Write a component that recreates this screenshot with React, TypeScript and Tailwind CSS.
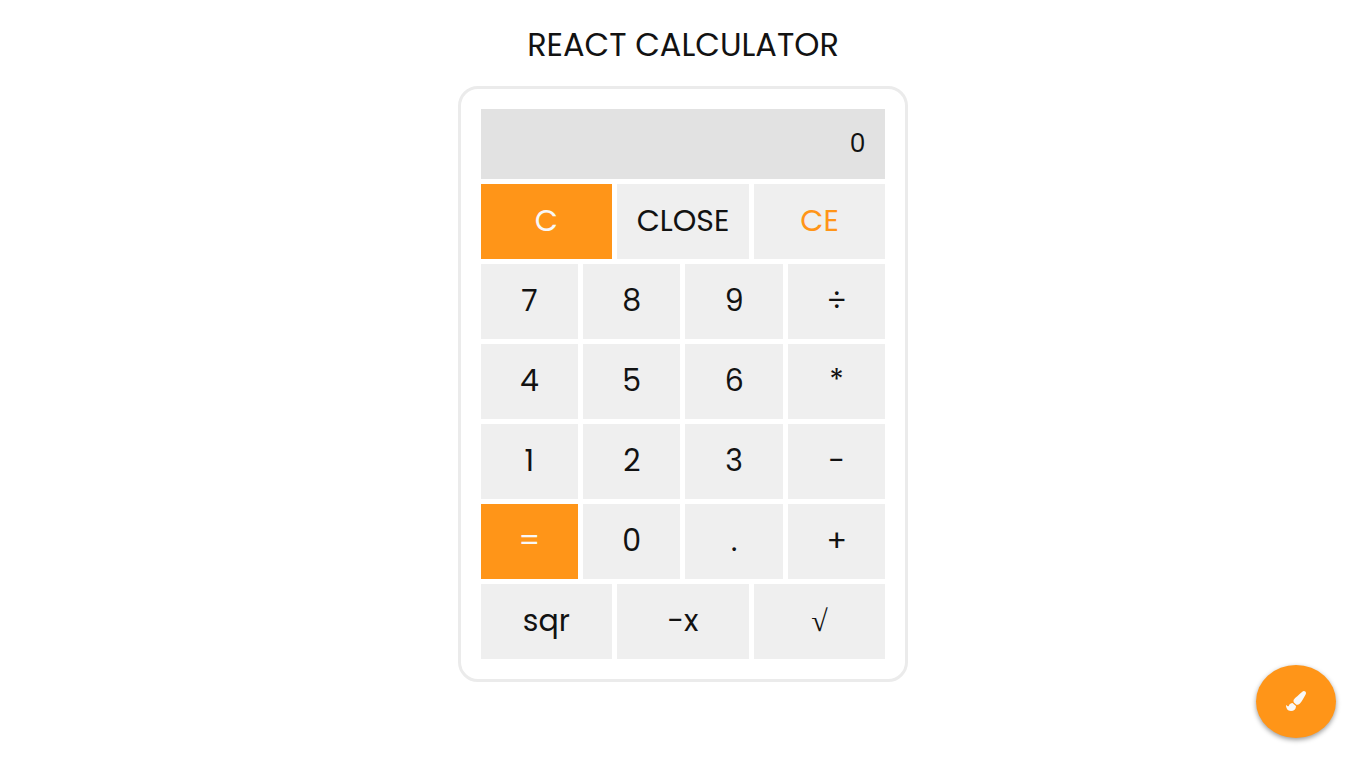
import { useState } from "react";
import { FaPaintBrush } from "react-icons/fa";

type Tone = "plain" | "solid" | "accent";

const tones: Record<Tone, string> = {
  plain: "bg-[#efefef] text-[#121212]",
  solid: "bg-[#ff9518] text-[#f8f8f8]",
  accent: "bg-[#efefef] text-[#ff9518]",
};

const rows: { label: string; tone?: Tone }[][] = [
  [{ label: "C", tone: "solid" }, { label: "CLOSE" }, { label: "CE", tone: "accent" }],
  [{ label: "7" }, { label: "8" }, { label: "9" }, { label: "÷" }],
  [{ label: "4" }, { label: "5" }, { label: "6" }, { label: "*" }],
  [{ label: "1" }, { label: "2" }, { label: "3" }, { label: "-" }],
  [{ label: "=", tone: "solid" }, { label: "0" }, { label: "." }, { label: "+" }],
  [{ label: "sqr" }, { label: "-x" }, { label: "√" }],
];

export default function App() {
  const [display, setDisplay] = useState("0");
  const [stored, setStored] = useState<number | null>(null);
  const [operator, setOperator] = useState("");
  const [fresh, setFresh] = useState(true);

  const compute = () => {
    const value = Number(display);
    if (stored === null) return value;
    if (operator === "+") return stored + value;
    if (operator === "-") return stored - value;
    if (operator === "*") return stored * value;
    return stored / value;
  };

  const show = (value: number) => {
    setDisplay(String(value));
    setFresh(true);
  };

  const press = (key: string) => {
    if (/^[0-9.]$/.test(key)) {
      if (key === "." && !fresh && display.includes(".")) return;
      setDisplay(fresh ? (key === "." ? "0." : key) : display + key);
      setFresh(false);
    } else if (key === "C" || key === "CLOSE") {
      show(0);
      setStored(null);
    } else if (key === "CE") show(0);
    else if (key === "sqr") show(Number(display) ** 2);
    else if (key === "-x") show(-Number(display));
    else if (key === "√") show(Math.sqrt(Number(display)));
    else {
      const result = compute();
      show(result);
      setStored(key === "=" ? null : result);
      setOperator(key);
    }
  };

  return (
    <div className="min-h-screen bg-white pt-5 font-['Poppins','Inter',sans-serif] text-[#121212]">
      <main className="flex flex-col items-center gap-4">
        <h1 className="text-[32px] leading-[50px]">REACT CALCULATOR</h1>
        <section
          aria-label="Calculator"
          className="flex w-[33%] min-w-80 flex-col gap-[5px] rounded-[20px] border-3 border-[#ebebeb] p-5"
        >
          <output className="flex h-[70px] items-center justify-end overflow-hidden bg-[#e2e2e2] px-5 text-[25px]">
            {display}
          </output>
          {rows.map((row) => (
            <div key={row[0].label} className="flex gap-[5px]">
              {row.map(({ label, tone = "plain" }) => (
                <button
                  key={label}
                  type="button"
                  onClick={() => press(label)}
                  className={`h-[75px] min-w-0 flex-1 cursor-pointer pb-0.5 text-[30px] ${tones[tone]} ${
                    label === "√" ? "font-['Liberation_Serif',serif]" : ""
                  }`}
                >
                  {label}
                </button>
              ))}
            </div>
          ))}
        </section>
      </main>
      <button
        type="button"
        aria-label="Change theme"
        className="fixed right-[30px] bottom-[30px] flex h-[73px] w-20 cursor-pointer items-center justify-center rounded-[50%] bg-[#ff9518] pb-0.5 text-xl text-[#f8f8f8] shadow-[0_2px_5px_rgba(0,0,0,0.4)]"
      >
        <FaPaintBrush />
      </button>
    </div>
  );
}
